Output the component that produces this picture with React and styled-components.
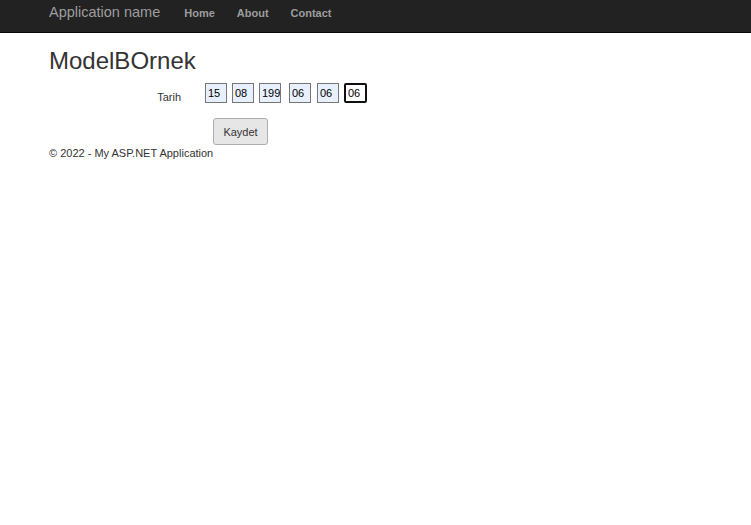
import React from 'react';
import styled, { createGlobalStyle } from 'styled-components';

const GlobalStyle = createGlobalStyle`
  body {
    margin: 0;
    background: #fff;
    font-family: "Liberation Sans", Arial, sans-serif;
    color: #333;
  }
`;

const Navbar = styled.nav`
  height: 32px;
  background-color: #222;
  border-bottom: 1px solid #080808;
  display: flex;
  align-items: flex-start;
  padding: 0 49px;
`;

const Brand = styled.a`
  font-size: 14.5px;
  line-height: 16px;
  padding-top: 4px;
  margin-right: 13px;
  color: #9d9d9d;
  text-decoration: none;
`;

const NavList = styled.ul`
  display: flex;
  list-style: none;
  margin: 0;
  padding: 0;
`;

const NavLink = styled.a`
  display: block;
  font-size: 11px;
  font-weight: bold;
  line-height: 13px;
  padding: 7px 11px 0;
  color: #9d9d9d;
  text-decoration: none;
`;

const Container = styled.div`
  padding: 0 49px;
`;

const Title = styled.h2`
  font-size: 24px;
  line-height: 26px;
  font-weight: normal;
  margin: 15px 0 9px;
  color: #333;
`;

const FormRow = styled.div`
  display: flex;
  align-items: flex-start;
`;

const Label = styled.label`
  width: 132px;
  padding-right: 12px;
  padding-top: 7px;
  text-align: right;
  font-size: 11px;
  line-height: 15px;
  color: #333;
`;

const Fields = styled.div`
  display: flex;
  margin-left: 12px;
`;

const Field = styled.input`
  box-sizing: border-box;
  width: ${(p) => (p.$focused ? '23px' : '22px')};
  height: 20px;
  margin: 0 ${(p) => p.$after}px 0 0;
  padding: 0 0 0 2px;
  font-family: "Liberation Sans", Arial, sans-serif;
  font-size: 11px;
  color: #000;
  background: ${(p) => (p.$focused ? '#fff' : '#e8f0fe')};
  border: ${(p) => (p.$focused ? '2px solid #101010' : '1px solid #767676')};
  border-radius: ${(p) => (p.$focused ? '2px' : '0')};
  outline: none;
`;

const ButtonRow = styled.div`
  padding: 13px 0 1px 164px;
`;

const Button = styled.button`
  width: 55px;
  height: 27px;
  padding: 0;
  font-family: "Liberation Sans", Arial, sans-serif;
  font-size: 11px;
  color: #333;
  background: #e6e6e6;
  border: 1px solid #adadad;
  border-radius: 3px;
`;

const Footer = styled.footer`
  font-size: 11px;
  line-height: 15px;
  color: #333;
`;

const parts = [
  { v: '15', after: 5 },
  { v: '08', after: 5 },
  { v: '1990', after: 8 },
  { v: '06', after: 6 },
  { v: '06', after: 5 },
  { v: '06', after: 0, focused: true },
];

export default function App() {
  return (
    <>
      <GlobalStyle />
      <Navbar>
        <Brand href="#">Application name</Brand>
        <NavList>
          <li><NavLink href="#">Home</NavLink></li>
          <li><NavLink href="#">About</NavLink></li>
          <li><NavLink href="#">Contact</NavLink></li>
        </NavList>
      </Navbar>
      <Container>
        <Title>ModelBOrnek</Title>
        <FormRow>
          <Label>Tarih</Label>
          <Fields>
            {parts.map((p, i) => (
              <Field
                key={i}
                type="text"
                value={p.v}
                readOnly
                $after={p.after}
                $focused={p.focused}
              />
            ))}
          </Fields>
        </FormRow>
        <ButtonRow>
          <Button type="button">Kaydet</Button>
        </ButtonRow>
        <Footer>© 2022 - My ASP.NET Application</Footer>
      </Container>
    </>
  );
}
